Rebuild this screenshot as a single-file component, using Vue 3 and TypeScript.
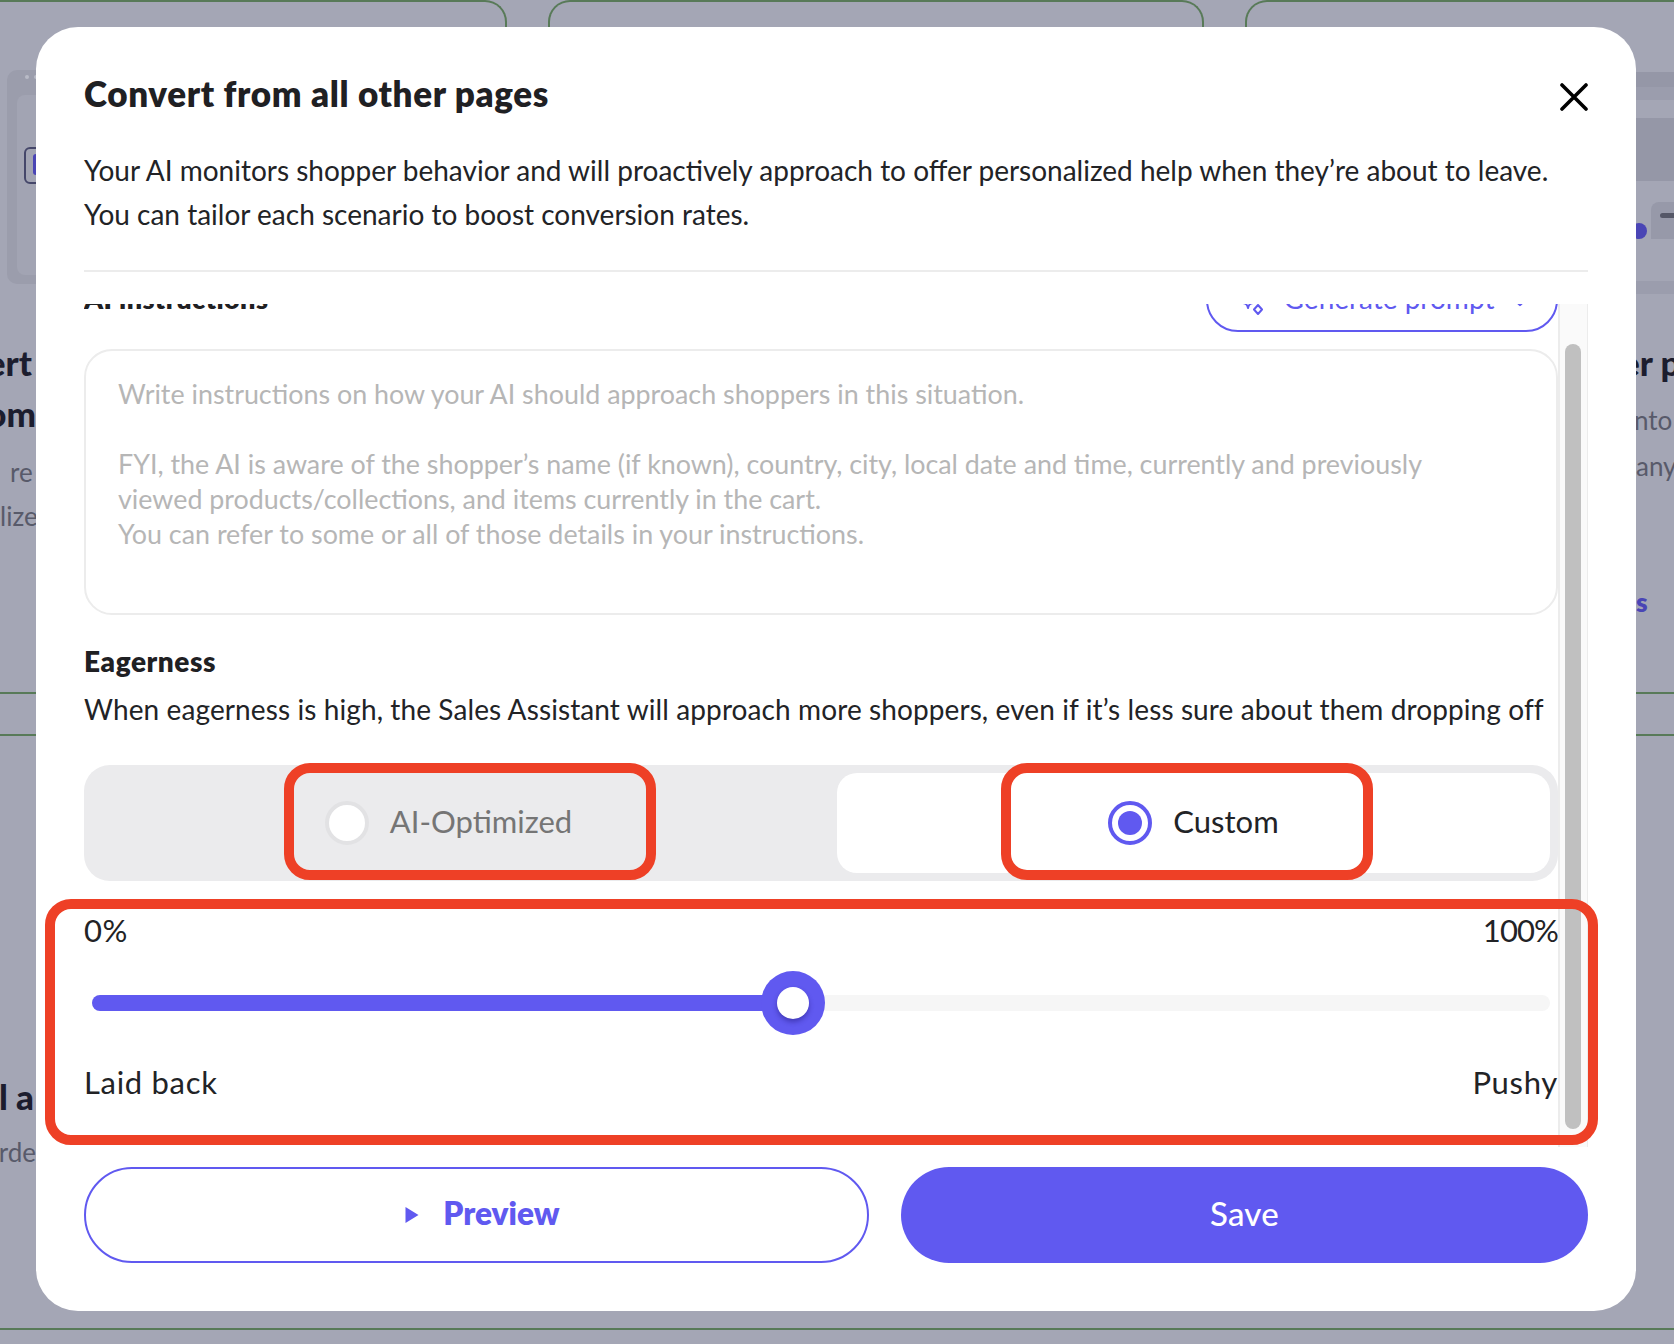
<script setup lang="ts">
const placeholder: string = [
  'Write instructions on how your AI should approach shoppers in this situation.',
  '',
  'FYI, the AI is aware of the shopper’s name (if known), country, city, local date and time, currently and previously',
  'viewed products/collections, and items currently in the cart.',
  'You can refer to some or all of those details in your instructions.',
].join('\n')
const eagerness: number = 48.1
</script>

<template>
  <div class="page">
    <div class="backdrop">
      <div class="tops">
        <div class="top-card c1"></div>
        <div class="top-card c2"></div>
        <div class="top-card c3"></div>
      </div>
      <div class="sides">
        <div class="side left">
          <div class="mock">
            <div class="mock-dots"><i></i><i></i></div>
            <div class="mock-inner"><div class="mock-chip"><b></b></div></div>
          </div>
          <div class="frag head first">ert</div>
          <div class="frag head om">om</div>
          <div class="frag sub mt9">re</div>
          <div class="frag sub">lize</div>
          <div class="rules l"></div>
          <div class="frag head mt334">l a</div>
          <div class="frag sub mt8">rde</div>
        </div>
        <div class="side right">
          <div class="band b1"></div>
          <div class="band b2"></div>
          <div class="band b3"></div>
          <div class="chip-row"><span class="dot"></span><span class="chip"><i></i></span></div>
          <div class="band b4"></div>
          <div class="rfrag head r1">er p</div>
          <div class="rfrag sub r2">nto</div>
          <div class="rfrag sub r3">anyw</div>
          <div class="rfrag link">s</div>
          <div class="rules r"></div>
        </div>
      </div>
      <div class="bottom-line"></div>
    </div>

    <section class="modal">
      <header class="head-row">
        <h2 class="title">Convert from all other pages</h2>
        <svg class="close" width="28" height="28" viewBox="0 0 28 28" fill="none" stroke="#000" stroke-width="3.6" stroke-linecap="round">
          <path d="M2 2 L26 26 M26 2 L2 26" />
        </svg>
      </header>
      <p class="intro">Your AI monitors shopper behavior and will proactively approach to offer personalized help when they’re about to leave.<br />You can tailor each scenario to boost conversion rates.</p>
      <div class="divider"></div>

      <div class="scroll">
        <div class="scroll-content">
          <div class="label-row">
            <span class="label">AI instructions</span>
            <button class="gen">
              <svg class="gen-icon" width="24" height="24" viewBox="0 0 24 24" fill="none" stroke="#6059f0" stroke-width="2" stroke-linejoin="round">
                <path d="M7 6 C7.6 9.5 8.6 10.5 12 11 C8.6 11.6 7.6 12.6 7 16 C6.4 12.6 5.4 11.6 2 11 C5.4 10.5 6.4 9.5 7 6 Z" />
                <path d="M17 13 L21 17.5 L17 22 L13 17.5 Z" />
              </svg>
              <span class="gen-text">Generate prompt</span>
              <svg class="gen-chev" width="14" height="10" viewBox="0 0 14 10" fill="none" stroke="#6059f0" stroke-width="2.4" stroke-linecap="round" stroke-linejoin="round">
                <path d="M2 2 L7 7 L12 2" />
              </svg>
            </button>
          </div>
          <textarea class="area" :placeholder="placeholder" readonly></textarea>

          <h3 class="eager">Eagerness</h3>
          <p class="desc">When eagerness is high, the Sales Assistant will approach more shoppers, even if it’s less sure about them dropping off</p>

          <div class="segment">
            <div class="seg-item">
              <span class="radio"></span>
              <span class="seg-text">AI-Optimized</span>
            </div>
            <div class="seg-item active">
              <span class="radio on"><i></i></span>
              <span class="seg-text">Custom</span>
            </div>
          </div>

          <div class="ends first-ends"><span>0%</span><span class="hundred">100%</span></div>
          <div class="slider">
            <div class="track">
              <div class="fill" :style="{ width: eagerness + '%' }"></div>
              <div class="thumb" :style="{ left: eagerness + '%' }"><i></i></div>
            </div>
          </div>
          <div class="ends last-ends"><span>Laid back</span><span>Pushy</span></div>
        </div>
        <div class="scrollbar"><div class="scroll-thumb"></div></div>
      </div>

      <footer class="actions">
        <button class="btn ghost">
          <svg width="14" height="16" viewBox="0 0 14 16"><path d="M0.5 0 L13.5 8 L0.5 16 Z" fill="#6059f0" /></svg>
          <span class="btn-text">Preview</span>
        </button>
        <button class="btn solid"><span class="btn-text">Save</span></button>
      </footer>
    </section>

    <div class="mark m-ai"></div>
    <div class="mark m-custom"></div>
    <div class="mark m-slider"></div>
  </div>
</template>

<style>
html, body { margin: 0; padding: 0; }
</style>

<style scoped>
.page {
  position: relative;
  width: 1674px;
  height: 1344px;
  overflow: hidden;
  box-sizing: border-box;
  background: #a4a6b5;
  padding: 27px 38px 33px 36px;
  display: flex;
  font-family: "Lato", "Liberation Sans", sans-serif;
  color: #222326;
}
.backdrop {
  position: absolute;
  inset: 0;
  display: grid;
  grid-template-columns: 1674px;
  grid-template-rows: 27px 1301px 16px;
  overflow: hidden;
}
.tops { display: flex; gap: 41px; overflow: hidden; }
.top-card {
  height: 60px;
  box-sizing: border-box;
  border: 2px solid #587a58;
  border-bottom: none;
  border-radius: 22px 22px 0 0;
  flex: none;
}
.c1 { width: 547px; margin-left: -40px; }
.c2 { width: 656px; }
.c3 { width: 600px; }
.sides { display: flex; justify-content: space-between; }
.side { overflow: hidden; display: flex; flex-direction: column; }
.side.left { width: 36px; padding-top: 43px; }
.side.right { width: 38px; padding-top: 45px; }
.mock {
  margin-left: 7px;
  width: 60px;
  height: 214px;
  flex: none;
  box-sizing: border-box;
  background: #9b9dac;
  border-radius: 10px 0 0 10px;
  padding: 5px 0 9px 10px;
  display: flex;
  flex-direction: column;
}
.mock-dots { display: flex; gap: 5px; height: 20px; padding: 0 0 0 8px; }
.mock-dots i { width: 4px; height: 4px; border-radius: 50%; background: #b9bbc7; }
.mock-inner {
  flex: 1;
  background: #a2a4b3;
  border-radius: 8px 0 0 8px;
  padding: 52px 0 0 7px;
}
.mock-chip {
  width: 30px;
  height: 37px;
  box-sizing: border-box;
  border: 2px solid #45476a;
  border-radius: 6px;
  padding: 5px 0 0 7px;
}
.mock-chip b { display: block; width: 14px; height: 21px; background: #4a45b5; border-radius: 3px; }
.frag {
  display: flex;
  justify-content: flex-end;
  white-space: nowrap;
  flex: none;
}
.head { font-size: 35px; font-weight: 900; line-height: 52px; color: #1c1d2e; height: 52px; }
.sub { font-size: 26px; line-height: 44px; color: #585a6a; height: 44px; }
.first { margin-top: 52px; padding-right: 4px; }
.om { margin-top: -1px; }
.mt9 { margin-top: 11px; justify-content: flex-start; padding-left: 10px; }
.frag.sub:not(.mt9):not(.mt8) { justify-content: flex-start; }
.mt334 { margin-top: 334px; padding-right: 2px; }
.mt8 { margin-top: 8px; }
.rules {
  flex: none;
  height: 44px;
  box-sizing: border-box;
  border-top: 2px solid #587a58;
  border-bottom: 2px solid #587a58;
}
.rules.l { margin-top: 154px; }
.rules.r { margin-top: 69px; }
.band { flex: none; }
.b1 { height: 15px; background: #9597a7; }
.b2 { height: 13px; background: #9b9dad; }
.b3 { height: 63px; margin-top: 18px; background: #9597a7; }
.b4 { height: 13px; margin-top: 42px; background: #9b9dad; }
.chip-row { display: flex; height: 37px; margin-top: 21px; flex: none; }
.dot {
  width: 16px;
  height: 16px;
  margin-left: -5px;
  margin-top: 21px;
  flex: none;
  border-radius: 50%;
  background: #4a45b5;
}
.chip {
  margin-left: 4px;
  width: 40px;
  flex: none;
  background: #9799a9;
  border-radius: 8px 0 0 0;
  padding: 11px 0 0 9px;
  box-sizing: border-box;
}
.chip i { display: block; height: 5px; border-radius: 3px; background: #555767; }
.rfrag { white-space: nowrap; flex: none; }
.r1 { margin-top: 42px; margin-left: -15px; }
.r2 { margin-top: 10px; margin-left: -2px; }
.r3 { margin-top: 2px; }
.link { margin-top: 94px; margin-bottom: 1px; font-size: 26px; font-weight: 800; line-height: 40px; color: #4a45b5; }
.bottom-line { height: 2px; background: #587a58; }

.modal {
  position: relative;
  flex: 1;
  display: flex;
  flex-direction: column;
  box-sizing: border-box;
  background: #fff;
  border-radius: 42px;
  padding: 47px 48px 48px;
}
.head-row { display: flex; justify-content: space-between; align-items: flex-start; height: 40px; flex: none; }
.title { margin: -1px 0 0; font-size: 35px; line-height: 40px; font-weight: 800; letter-spacing: 0.65px; color: #1f2023; }
.close { margin-top: 9px; margin-right: 0; }
.intro { margin: 34px 0 0; font-size: 28px; line-height: 44px; flex: none; white-space: nowrap; }
.divider { height: 2px; background: #ececec; margin-top: 34px; flex: none; }

.scroll { margin-top: 32px; flex: 1; min-height: 0; display: flex; overflow: hidden; }
.scroll-content { width: 1474px; flex: none; }
.label-row {
  margin-top: -36px;
  height: 64px;
  display: flex;
  justify-content: space-between;
  align-items: center;
}
.label { font-size: 27px; font-weight: 800; letter-spacing: 0.4px; line-height: 36px; color: #1f2023; margin-bottom: 2px; }
.gen {
  width: 352px;
  height: 64px;
  box-sizing: border-box;
  background: #fff;
  border: 2px solid #6059f0;
  border-radius: 32px;
  display: flex;
  align-items: center;
  justify-content: center;
  gap: 19px;
  color: #6059f0;
  font: inherit;
  font-size: 28px;
  padding: 0 0 0 4px;
}
.gen-text { margin-bottom: 4px; }
.gen-icon { margin-top: 7px; }
.gen-chev { margin-top: 6px; }
.area {
  display: block;
  margin-top: 17px;
  width: 100%;
  height: 266px;
  box-sizing: border-box;
  border: 2px solid #ececec;
  border-radius: 28px;
  padding: 25px 32px 23px;
  font: inherit;
  font-size: 26.85px;
  line-height: 35px;
  resize: none;
  outline: none;
  overflow: hidden;
  background: #fff;
}
.area::placeholder { color: #b6b6b6; opacity: 1; }
.eager { margin: 28px 0 0; font-size: 28px; line-height: 36px; font-weight: 800; letter-spacing: 0.55px; color: #1f2023; }
.desc { margin: 8px 0 0; font-size: 28px; line-height: 44px; letter-spacing: 0.1px; white-space: nowrap; }
.segment {
  margin-top: 34px;
  height: 116px;
  box-sizing: border-box;
  padding: 8px;
  background: #ebebed;
  border-radius: 26px;
  display: grid;
  grid-template-columns: 1fr 1fr;
  gap: 32px;
}
.seg-item {
  display: flex;
  align-items: center;
  justify-content: center;
  gap: 21px;
  font-size: 31px;
  color: #757575;
  border-radius: 20px;
}
.seg-text { margin-bottom: 5px; }
.seg-item.active { background: #fff; color: #222326; }
.radio {
  width: 44px;
  height: 44px;
  box-sizing: border-box;
  border-radius: 50%;
  background: #fff;
  border: 4px solid #e2e2e4;
  display: flex;
  align-items: center;
  justify-content: center;
  flex: none;
}
.radio.on { border-color: #6059f0; }
.radio.on i { width: 24px; height: 24px; border-radius: 50%; background: #6059f0; }
.ends {
  display: flex;
  justify-content: space-between;
  font-size: 31px;
  line-height: 44px;
  letter-spacing: 0.4px;
}
.hundred { letter-spacing: -0.9px; }
.first-ends { margin-top: 27px; }
.last-ends { margin-top: 25px; letter-spacing: 0.7px; }
.slider { margin-top: 19px; padding: 0 8px; height: 64px; display: flex; align-items: center; }
.track { position: relative; flex: 1; height: 16px; border-radius: 8px; background: #f6f6f6; }
.fill { height: 100%; border-radius: 8px 0 0 8px; background: #6059f0; }
.thumb {
  position: absolute;
  top: -24px;
  width: 64px;
  height: 64px;
  margin-left: -32px;
  border-radius: 50%;
  background: #6059f0;
  display: flex;
  align-items: center;
  justify-content: center;
}
.thumb i {
  width: 32px;
  height: 32px;
  border-radius: 50%;
  background: #fff;
  box-shadow: 0 3px 5px rgba(30, 22, 120, 0.45);
}
.scrollbar {
  width: 30px;
  flex: none;
  box-sizing: border-box;
  background: #fafafa;
  border-left: 2px solid #ececec;
  border-right: 1px solid #ececec;
  padding: 40px 5px 18px;
}
.scroll-thumb { height: 100%; width: 16px; margin-left: 0; border-radius: 8px; background: #c0c0c0; }

.actions {
  margin-top: 20px;
  flex: none;
  display: flex;
  justify-content: space-between;
}
.btn {
  height: 96px;
  box-sizing: border-box;
  border-radius: 48px;
  font: inherit;
  display: flex;
  align-items: center;
  justify-content: center;
  padding: 0;
}
.btn-text { margin-bottom: 5px; }
.ghost {
  width: 785px;
  background: #fff;
  border: 2px solid #6059f0;
  color: #6059f0;
  font-size: 31.6px;
  font-weight: 800;
  gap: 24px;
  padding-left: 12px;
}
.solid {
  width: 687px;
  background: #6059f0;
  border: none;
  color: #fff;
  font-size: 33px;
  letter-spacing: 0.3px;
  font-weight: 500;
}
.mark {
  position: absolute;
  box-sizing: border-box;
  border: 10px solid #ee4026;
  border-radius: 26px;
  pointer-events: none;
}
.m-ai { left: 284px; top: 763px; width: 372px; height: 117px; }
.m-custom { left: 1001px; top: 763px; width: 372px; height: 117px; }
.m-slider { left: 45px; top: 899px; width: 1553px; height: 246px; }
</style>
